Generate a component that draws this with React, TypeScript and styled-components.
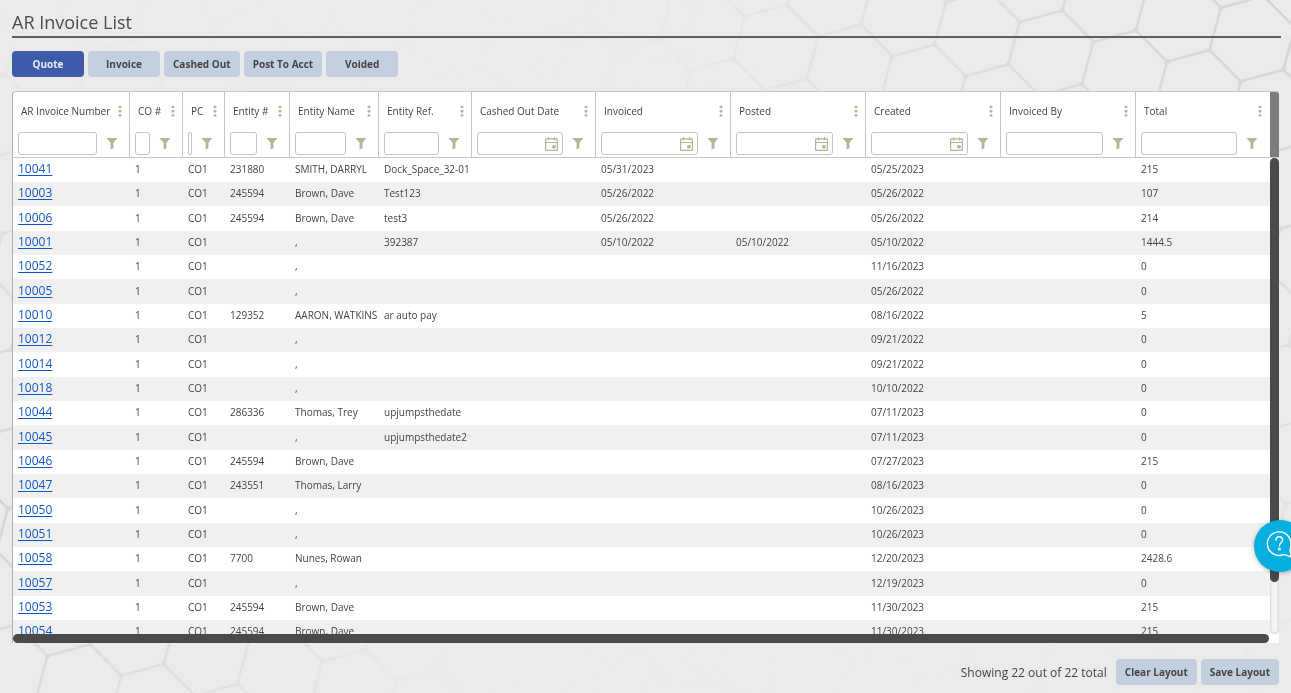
import React from "react";
import styled, { createGlobalStyle } from "styled-components";

const GlobalStyle = createGlobalStyle`
  *, *::before, *::after { box-sizing: border-box; }
  body {
    margin: 0;
    background: #ebebeb;
    color: #444;
    font-family: "Open Sans", "Noto Sans", sans-serif;
    font-size: 10px;
  }
  button, input { font: inherit; color: inherit; }
`;

const Page = styled.main`
  position: relative;
  display: flex;
  flex-direction: column;
  height: 100vh;
  min-height: 400px;
  padding: 8px 12px 8px;
`;

const Backdrop = styled.svg<{ $side: "left" | "right" }>`
  position: fixed;
  z-index: -1;
  width: 760px;
  height: 700px;
  ${(p) => (p.$side === "left" ? "left: 0; bottom: 0;" : "right: 0; top: 0;")}
`;

const Title = styled.h1`
  margin: 0 -2px 13px 0;
  height: 30px;
  border-bottom: 2px solid #5f5f5f;
  font-size: 18px;
  font-weight: 400;
  line-height: 28px;
  color: #4c4c4c;
`;

const ButtonBar = styled.nav`
  display: flex;
  gap: 4px;
  margin-bottom: 14px;
`;

const Button = styled.button<{ $primary?: boolean }>`
  min-width: 72px;
  height: 26px;
  padding: 0 9px;
  border: 0;
  border-radius: 4px;
  background: ${(p) => (p.$primary ? "#3c5ca9" : "#c3cfdf")};
  color: ${(p) => (p.$primary ? "#e6ebf5" : "#444")};
  font-weight: 700;
  line-height: 26px;
  white-space: nowrap;
`;

const Panel = styled.section`
  display: grid;
  grid-template-columns: minmax(0, 1fr) 9px;
  grid-template-rows: minmax(0, 1fr) 9px;
  flex: 1 1 0;
  min-height: 0;
  border-top: 1px solid #c6c6c6;
  border-left: 1px solid #b0b0b0;
  border-radius: 4px 3px 0 0;
  background: #fff;
  overflow: hidden;
`;

const Viewport = styled.div`
  overflow: hidden;
`;

const ScrollColumn = styled.div`
  display: flex;
  flex-direction: column;
`;

const ScrollCorner = styled.div`
  height: 66px;
  border-bottom: 1px solid #c6c6c6;
  background: #7d7d7d;
`;

const ScrollTrack = styled.div`
  flex: 1;
  border-radius: 5px;
  background: #f4f4f4;
  box-shadow: inset 0 0 3px #b8b8b8;
`;

const ScrollThumb = styled.div`
  height: 89%;
  border-radius: 5px;
  background: #4a4a4a;
`;

const ScrollBottom = styled.div`
  margin-right: 1px;
  border-radius: 5px;
  background: #4a4a4a;
`;

const Grid = styled.table`
  width: 100%;
  border-collapse: separate;
  border-spacing: 0;
  table-layout: fixed;
`;

const HeadCell = styled.th`
  height: 66px;
  padding: 0;
  border-right: 1px solid #c6c6c6;
  border-bottom: 1px solid #c6c6c6;
  font-weight: 400;
  text-align: left;
  vertical-align: top;
  &:last-child { border-right-color: transparent; }
`;

const HeadTitle = styled.div`
  display: flex;
  align-items: center;
  justify-content: space-between;
  height: 38px;
  margin-bottom: 2px;
  padding: 0 7px 0 8px;
  white-space: nowrap;
`;

const FilterRow = styled.div`
  display: flex;
  align-items: center;
  padding: 0 11px 0 5px;
`;

const FilterBox = styled.div`
  display: flex;
  align-items: center;
  flex: 1;
  min-width: 0;
  height: 23px;
  margin-right: 9px;
  border: 1px solid #c4c4c4;
  border-radius: 3px;
  background: #fff;
  overflow: hidden;
`;

const FilterInput = styled.input`
  flex: 1;
  width: 0;
  min-width: 0;
  height: 21px;
  padding: 0;
  border: 0;
  background: transparent;
  outline: 0;
`;

const IconButton = styled.button<{ $gap?: number }>`
  display: flex;
  flex: none;
  margin: 0 ${(p) => p.$gap ?? 0}px 0 0;
  padding: 0;
  border: 0;
  background: transparent;
  color: #b2b694;
`;

const Row = styled.tr`
  height: 24px;
  background: #fff;
  &:nth-child(even) { background: #f0f0f0; }
  &:nth-child(3n) { height: 25px; }
`;

const Cell = styled.td`
  padding: 0 5px 2px;
  line-height: 22px;
  white-space: nowrap;
`;

const InvoiceLink = styled.a`
  color: #1158c7;
  font-size: 12px;
  text-decoration: underline;
  text-underline-offset: 2px;
`;

const Footer = styled.footer`
  display: flex;
  align-items: center;
  justify-content: flex-end;
  gap: 4px;
  margin-top: 16px;
`;

const Summary = styled.span`
  margin-right: 5px;
  padding-top: 2px;
  font-size: 12px;
  line-height: 24px;
`;

const HelpButton = styled.button`
  position: fixed;
  right: -15px;
  bottom: 121px;
  display: flex;
  align-items: center;
  justify-content: center;
  width: 52px;
  height: 52px;
  padding: 0 0 2px;
  border: 0;
  border-radius: 50%;
  background: #05afdf;
  color: #fff;
  box-shadow: 0 1px 4px rgba(0, 0, 0, 0.3);
`;

const DotsIcon = () => (
  <svg width="4" height="12" viewBox="0 0 4 12" fill="currentColor" aria-hidden="true">
    <rect x="0.6" y="0.8" width="2.8" height="2.4" rx="0.6" />
    <rect x="0.6" y="5" width="2.8" height="2.4" rx="0.6" />
    <rect x="0.6" y="9.2" width="2.8" height="2.4" rx="0.6" />
  </svg>
);

const FunnelIcon = () => (
  <svg width="12" height="12" viewBox="0 0 12 12" fill="currentColor" aria-hidden="true">
    <path d="M0.4 0H11.4L7.4 4.8V10.2L4.6 11.4V4.8Z" />
  </svg>
);

const CalendarIcon = () => (
  <svg width="13" height="14" viewBox="0 0 13 14" fill="none" stroke="currentColor" aria-hidden="true">
    <rect x="0.6" y="1.9" width="11.8" height="11.5" rx="0.6" strokeWidth="1.2" />
    <path d="M0.6 5.5H12.4M3.5 0.3V3.4M9.5 0.3V3.4" strokeWidth="1.2" />
    <rect x="7.3" y="8.2" width="3.4" height="3.2" fill="currentColor" stroke="none" />
  </svg>
);

const HelpIcon = () => (
  <svg width="36" height="32" viewBox="0 0 36 32" fill="none" stroke="currentColor" strokeWidth="1.4" strokeLinecap="round" strokeLinejoin="round" aria-hidden="true">
    <path d="M22 25.4A11.8 11.8 0 1 1 28.6 17.5" />
    <path d="M22 25.4L28.5 27.8" />
    <path d="M31.5 16.4A5.6 5.6 0 0 0 28.9 24.6L28.5 27.8L31 26.6A6 6 0 0 0 35 26" />
    <path d="M14 11.2C14 8.8 15.4 7.8 17.2 7.8C19.1 7.8 20.6 9 20.6 11C20.6 13.6 17.4 13.8 17.4 16.8" />
    <circle cx="17.4" cy="20" r="1" strokeWidth="1.1" />
  </svg>
);

// Tilted honeycomb: each node carries three edges of one hexagon side each.
const honeycomb = (x0: number, y0: number) => {
  const edges: string[] = [];
  const nodes: [number, number][] = [];
  for (let i = -14; i <= 14; i++) {
    for (let j = -14; j <= 14; j++) {
      const x = x0 + i * 73.7 + j * 19.8;
      const y = y0 + i * 19.8 + j * 73.7;
      if (x < -60 || x > 820 || y < -60 || y > 760) continue;
      edges.push(`M${x - 42.6} ${y + 11.7}L${x} ${y}L${x + 31.1} ${y + 31.3}M${x} ${y}L${x + 11.3} ${y - 42}`);
      nodes.push([x, y], [x - 42.6, y + 11.7]);
    }
  }
  return { path: edges.join(""), nodes };
};

type HoneycombProps = { side: "left" | "right"; x: number; y: number; cx: number; cy: number; r: number };

const Honeycomb = ({ side, x, y, cx, cy, r }: HoneycombProps) => {
  const { path, nodes } = honeycomb(x, y);
  return (
    <Backdrop $side={side} viewBox="0 0 760 700" aria-hidden="true">
      <defs>
        <radialGradient id={`fade-${side}`} gradientUnits="userSpaceOnUse" cx={cx} cy={cy} r={r}>
          <stop offset="0" stopColor="#d6d6d6" />
          <stop offset="1" stopColor="#ebebeb" />
        </radialGradient>
      </defs>
      <path d={path} fill="none" stroke={`url(#fade-${side})`} strokeWidth="2.6" />
      <g fill={`url(#fade-${side})`}>
        {nodes.map(([nx, ny], n) => (
          <circle key={n} cx={nx} cy={ny} r="2.6" />
        ))}
      </g>
    </Backdrop>
  );
};

type Column = { title: string; width?: number; date?: boolean };

const columns: Column[] = [
  { title: "AR Invoice Number", width: 117 },
  { title: "CO #", width: 53 },
  { title: "PC", width: 42 },
  { title: "Entity #", width: 65 },
  { title: "Entity Name", width: 89 },
  { title: "Entity Ref.", width: 93 },
  { title: "Cashed Out Date", width: 124, date: true },
  { title: "Invoiced", width: 135, date: true },
  { title: "Posted", width: 135, date: true },
  { title: "Created", width: 135, date: true },
  { title: "Invoiced By", width: 135 },
  { title: "Total" },
];

type Invoice = {
  id: string;
  entity?: string;
  name?: string;
  ref?: string;
  invoiced?: string;
  posted?: string;
  created: string;
  total: string;
};

const invoices: Invoice[] = [
  { id: "10041", entity: "231880", name: "SMITH, DARRYL", ref: "Dock_Space_32-01", invoiced: "05/31/2023", created: "05/25/2023", total: "215" },
  { id: "10003", entity: "245594", name: "Brown, Dave", ref: "Test123", invoiced: "05/26/2022", created: "05/26/2022", total: "107" },
  { id: "10006", entity: "245594", name: "Brown, Dave", ref: "test3", invoiced: "05/26/2022", created: "05/26/2022", total: "214" },
  { id: "10001", ref: "392387", invoiced: "05/10/2022", posted: "05/10/2022", created: "05/10/2022", total: "1444.5" },
  { id: "10052", created: "11/16/2023", total: "0" },
  { id: "10005", created: "05/26/2022", total: "0" },
  { id: "10010", entity: "129352", name: "AARON, WATKINS", ref: "ar auto pay", created: "08/16/2022", total: "5" },
  { id: "10012", created: "09/21/2022", total: "0" },
  { id: "10014", created: "09/21/2022", total: "0" },
  { id: "10018", created: "10/10/2022", total: "0" },
  { id: "10044", entity: "286336", name: "Thomas, Trey", ref: "upjumpsthedate", created: "07/11/2023", total: "0" },
  { id: "10045", ref: "upjumpsthedate2", created: "07/11/2023", total: "0" },
  { id: "10046", entity: "245594", name: "Brown, Dave", created: "07/27/2023", total: "215" },
  { id: "10047", entity: "243551", name: "Thomas, Larry", created: "08/16/2023", total: "0" },
  { id: "10050", created: "10/26/2023", total: "0" },
  { id: "10051", created: "10/26/2023", total: "0" },
  { id: "10058", entity: "7700", name: "Nunes, Rowan", created: "12/20/2023", total: "2428.6" },
  { id: "10057", created: "12/19/2023", total: "0" },
  { id: "10053", entity: "245594", name: "Brown, Dave", created: "11/30/2023", total: "215" },
  { id: "10054", entity: "245594", name: "Brown, Dave", created: "11/30/2023", total: "215" },
];

const HeaderCell = ({ title, date }: Column) => (
  <HeadCell scope="col">
    <HeadTitle>
      {title}
      <IconButton type="button" aria-label={`${title} menu`}>
        <DotsIcon />
      </IconButton>
    </HeadTitle>
    <FilterRow>
      <FilterBox>
        <FilterInput type="text" aria-label={`Filter ${title}`} />
        {date && (
          <IconButton type="button" aria-label={`Pick ${title} date`} $gap={4}>
            <CalendarIcon />
          </IconButton>
        )}
      </FilterBox>
      <IconButton type="button" aria-label={`${title} filter options`}>
        <FunnelIcon />
      </IconButton>
    </FilterRow>
  </HeadCell>
);

const InvoiceRow = ({ invoice }: { invoice: Invoice }) => (
  <Row>
    <Cell><InvoiceLink href="#">{invoice.id}</InvoiceLink></Cell>
    <Cell>1</Cell>
    <Cell>CO1</Cell>
    <Cell>{invoice.entity}</Cell>
    <Cell>{invoice.name ?? ","}</Cell>
    <Cell>{invoice.ref}</Cell>
    <Cell />
    <Cell>{invoice.invoiced}</Cell>
    <Cell>{invoice.posted}</Cell>
    <Cell>{invoice.created}</Cell>
    <Cell />
    <Cell>{invoice.total}</Cell>
  </Row>
);

const tabs = ["Quote", "Invoice", "Cashed Out", "Post To Acct", "Voided"];

export default function App() {
  return (
    <>
      <GlobalStyle />
      <Honeycomb side="right" x={477.3} y={64.3} cx={760} cy={0} r={740} />
      <Honeycomb side="left" x={90} y={651.3} cx={0} cy={500} r={520} />
      <Page>
        <Title>AR Invoice List</Title>
        <ButtonBar aria-label="Invoice status">
          {tabs.map((tab, i) => (
            <Button key={tab} type="button" $primary={i === 0}>{tab}</Button>
          ))}
        </ButtonBar>
        <Panel>
          <Viewport>
            <Grid>
              <colgroup>
                {columns.map((c) => <col key={c.title} width={c.width} />)}
              </colgroup>
              <thead>
                <tr>{columns.map((c) => <HeaderCell key={c.title} {...c} />)}</tr>
              </thead>
              <tbody>
                {invoices.map((invoice) => <InvoiceRow key={invoice.id} invoice={invoice} />)}
              </tbody>
            </Grid>
          </Viewport>
          <ScrollColumn>
            <ScrollCorner />
            <ScrollTrack><ScrollThumb /></ScrollTrack>
          </ScrollColumn>
          <ScrollBottom />
        </Panel>
        <Footer>
          <Summary>Showing 22 out of 22 total</Summary>
          <Button type="button">Clear Layout</Button>
          <Button type="button">Save Layout</Button>
        </Footer>
      </Page>
      <HelpButton type="button" aria-label="Help"><HelpIcon /></HelpButton>
    </>
  );
}
